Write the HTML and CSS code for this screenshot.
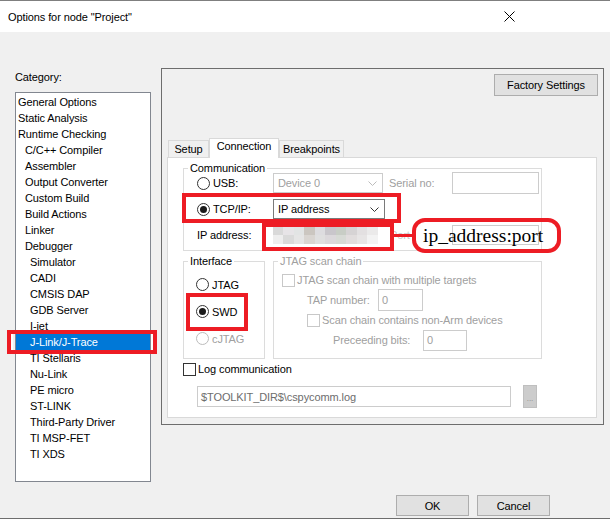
FILE: index.html
```html
<!DOCTYPE html>
<html lang="en">
<head>
    <meta charset="UTF-8">
    <title>Options for node "Project"</title>
    <link rel="stylesheet" href="styles.css">
</head>
<body>

<div class="dialog">
    <!-- Title bar -->
    <div class="titlebar">
        <span class="title">Options for node "Project"</span>
        <svg class="close" width="11" height="11" viewBox="0 0 11 11">
            <path d="M0.5 0.5 L10.5 10.5 M10.5 0.5 L0.5 10.5" stroke="#000" stroke-width="1" fill="none"/>
        </svg>
    </div>

    <div class="dialog-body">
        <div class="main">
            <!-- Category list -->
            <div class="category">
                <div class="category-label">Category:</div>
                <ul class="category-list">
                    <li>General Options</li>
                    <li>Static Analysis</li>
                    <li>Runtime Checking</li>
                    <li class="lvl2">C/C++ Compiler</li>
                    <li class="lvl2">Assembler</li>
                    <li class="lvl2">Output Converter</li>
                    <li class="lvl2">Custom Build</li>
                    <li class="lvl2">Build Actions</li>
                    <li class="lvl2">Linker</li>
                    <li class="lvl2">Debugger</li>
                    <li class="lvl3">Simulator</li>
                    <li class="lvl3">CADI</li>
                    <li class="lvl3">CMSIS DAP</li>
                    <li class="lvl3">GDB Server</li>
                    <li class="lvl3">I-jet</li>
                    <li class="lvl3 selected">J-Link/J-Trace<span class="mark mark-list"></span></li>
                    <li class="lvl3">TI Stellaris</li>
                    <li class="lvl3">Nu-Link</li>
                    <li class="lvl3">PE micro</li>
                    <li class="lvl3">ST-LINK</li>
                    <li class="lvl3">Third-Party Driver</li>
                    <li class="lvl3">TI MSP-FET</li>
                    <li class="lvl3">TI XDS</li>
                </ul>
            </div>

            <!-- Options panel -->
            <div class="options">
                <button class="btn factory">Factory Settings</button>

                <div class="tabs">
                    <div class="tab-strip">
                        <span class="tab tab-setup">Setup</span>
                        <span class="tab tab-conn active">Connection</span>
                        <span class="tab tab-bp">Breakpoints</span>
                    </div>

                    <div class="tab-page">
                        <div class="group comm">
                            <div class="group-title">Communication</div>
                            <div class="comm-grid">
                                <div class="radio-row"><span class="radio"></span>USB:</div>
                                <div class="combo disabled combo-dev">Device 0
                                    <svg width="9" height="5" viewBox="0 0 9 5"><path d="M0.5 0.5 L4.5 4.5 L8.5 0.5" stroke="#bcbcbc" fill="none"/></svg>
                                </div>
                                <div class="cell-label disabled-text">Serial no:</div>
                                <div class="field field-serial"></div>

                                <div class="radio-row"><span class="radio on"></span>TCP/IP:</div>
                                <div class="combo combo-ip">IP address
                                    <svg width="9" height="5" viewBox="0 0 9 5"><path d="M0.5 0.5 L4.5 4.5 L8.5 0.5" stroke="#333" fill="none"/></svg>
                                </div>
                                <div></div>
                                <div></div>

                                <div class="ip-label">IP address:</div>
                                <div class="blur-field">
                                    <div class="blur-row blur-a"></div>
                                    <div class="blur-row blur-b"></div>
                                </div>
                                <div class="cell-label port-label">Port</div>
                                <div class="field field-port"></div>
                            </div>

                            <span class="mark mark-tcp"></span>
                            <span class="mark mark-ip"></span>
                            <span class="mark-line"></span>
                            <span class="callout">ip_address:port</span>
                        </div>

                        <div class="lower">
                            <div class="group iface">
                                <div class="group-title">Interface</div>
                                <div class="iface-list">
                                    <div class="radio-row"><span class="radio"></span>JTAG</div>
                                    <div class="radio-row"><span class="radio on"></span>SWD<span class="mark mark-swd"></span></div>
                                    <div class="radio-row disabled-text"><span class="radio off"></span>cJTAG</div>
                                </div>
                            </div>

                            <div class="group scan">
                                <div class="group-title disabled-text">JTAG scan chain</div>
                                <div class="scan-body disabled-text">
                                    <div class="scan-row"><span class="check off"></span>JTAG scan chain with multiple targets</div>
                                    <div class="scan-row row-tap">
                                        <span class="scan-label tap-label">TAP number:</span>
                                        <span class="field field-tap">0</span>
                                    </div>
                                    <div class="scan-row row-nonarm"><span class="check off"></span>Scan chain contains non-Arm devices</div>
                                    <div class="scan-row row-bits">
                                        <span class="scan-label bits-label">Preceeding bits:</span>
                                        <span class="field field-bits">0</span>
                                    </div>
                                </div>
                            </div>
                        </div>

                        <div class="log-row"><span class="check"></span>Log communication</div>
                        <div class="path-row">
                            <div class="field field-path">$TOOLKIT_DIR$\cspycomm.log</div>
                            <div class="browse">...</div>
                        </div>
                    </div>
                </div>
            </div>
        </div>

        <div class="buttons">
            <button class="btn">OK</button>
            <button class="btn">Cancel</button>
        </div>
    </div>
</div>

</body>
</html>
```

FILE: styles.css
```css
html {
    background: #fff;
}

body {
    margin: 0;
    width: 610px;
    height: 530px;
    overflow: hidden;
    font-family: "Liberation Sans", Arial, sans-serif;
    font-size: 11px;
    letter-spacing: -0.1px;
    color: #000;
}

.dialog {
    border-top: 1px solid #7f7f7f;
}

/* title bar */
.titlebar {
    height: 31px;
    background: #fff;
    display: flex;
    align-items: center;
    padding-left: 8px;
}

.title {
    flex: 1;
    font-size: 11px;
    letter-spacing: -0.1px;
}

.close {
    margin-right: 95px;
}

.dialog-body {
    height: 486px;
    background: #f0f0f0;
    border-bottom: 1px solid #6d6d6d;
}

.main {
    display: flex;
    height: 450px;
    padding-left: 15px;
}

/* category list */
.category {
    width: 136px;
    padding-top: 37px;
}

.category-label {
    line-height: 16px;
    margin-bottom: 7px;
}

.category-list {
    list-style: none;
    margin: 0;
    padding: 1px 0 0;
    height: 390px;
    box-sizing: border-box;
    border: 1px solid #828790;
    background: #fff;
}

.category-list li {
    position: relative;
    line-height: 16px;
    padding-left: 2px;
    white-space: nowrap;
}

.category-list li.lvl2 {
    padding-left: 9px;
}

.category-list li.lvl3 {
    padding-left: 14px;
}

.category-list li.selected {
    background: #0078d7;
    color: #fff;
}

/* red annotation marks */
.mark {
    position: absolute;
    box-sizing: border-box;
    border: 4px solid #ed1c24;
}

.mark-list {
    left: -9px;
    right: -7px;
    top: -4px;
    bottom: -4px;
    box-shadow: inset 2px 0 0 #fff, inset -2px 0 0 #fff;
}

.mark-tcp {
    left: -2px;
    top: 24px;
    width: 219px;
    height: 30px;
}

.mark-ip {
    left: 78px;
    top: 54px;
    width: 132px;
    height: 28px;
}

.mark-line {
    position: absolute;
    left: 209px;
    top: 65px;
    width: 20px;
    height: 3px;
    background: #ed1c24;
}

.callout {
    position: absolute;
    left: 228px;
    top: 49px;
    width: 149px;
    height: 35px;
    box-sizing: border-box;
    border: 4px solid #ed1c24;
    border-radius: 13px;
    padding-left: 7px;
    display: flex;
    align-items: center;
    font-family: "Liberation Serif", "Times New Roman", serif;
    font-size: 19.5px;
    letter-spacing: 0;
    color: #000;
    white-space: nowrap;
}

.mark-swd {
    left: -10px;
    top: -8px;
    width: 62px;
    height: 38px;
}

/* options panel */
.options {
    margin-left: 10px;
    margin-top: 36px;
    width: 443px;
    height: 357px;
    box-sizing: border-box;
    border: 1px solid #6d6d6d;
    padding: 5px 5px 0;
    display: flex;
    flex-direction: column;
}

.btn {
    font: inherit;
    letter-spacing: inherit;
    color: #000;
    background: #e1e1e1;
    border: 1px solid #adadad;
    padding: 0;
    width: 73px;
    height: 21px;
}

.factory {
    align-self: flex-end;
    width: 104px;
    height: 22px;
}

.tabs {
    margin-top: 42px;
}

.tab-strip {
    display: flex;
    align-items: flex-end;
    height: 19px;
    padding-left: 1px;
    position: relative;
    z-index: 1;
}

.tab {
    height: 17px;
    box-sizing: border-box;
    border: 1px solid #d9d9d9;
    border-bottom: none;
    background: #f0f0f0;
    text-align: center;
    line-height: 16px;
}

.tab-setup { width: 41px; }
.tab-conn { width: 70px; }
.tab-bp { width: 65px; }

.tab.active {
    height: 20px;
    margin-bottom: -1px;
    background: #fff;
    line-height: 15px;
}

.tab-page {
    width: 430px;
    height: 261px;
    box-sizing: border-box;
    border: 1px solid #d9d9d9;
    background: #fff;
    padding: 10px 0 0 15px;
}

/* group boxes */
.group {
    position: relative;
    box-sizing: border-box;
    border: 1px solid #dcdcdc;
}

.group-title {
    width: max-content;
    background: #fff;
    padding: 0 2px;
    margin: -8px 0 0 4px;
    line-height: 14px;
}

.disabled-text {
    color: #a0a0a0;
}

.comm {
    width: 359px;
    height: 83px;
}

.comm .group-title {
    margin-bottom: -2px;
}

.comm-grid {
    display: grid;
    grid-template-columns: 76px 111px 68px 87px;
    grid-template-rows: repeat(3, 20px);
    row-gap: 6px;
    align-items: center;
    padding-left: 13px;
}

.radio-row {
    position: relative;
    display: flex;
    align-items: center;
    gap: 3px;
    height: 21px;
}

.radio {
    width: 13px;
    height: 13px;
    box-sizing: border-box;
    border: 1px solid #333;
    border-radius: 50%;
    background: #fff;
    display: inline-flex;
    align-items: center;
    justify-content: center;
}

.radio.on::after {
    content: "";
    width: 7px;
    height: 7px;
    border-radius: 50%;
    background: #1a1a1a;
}

.radio.off {
    border-color: #bcbcbc;
}

.check {
    width: 13px;
    height: 13px;
    box-sizing: border-box;
    border: 1px solid #333;
    background: #fff;
    margin-right: 2px;
    flex: none;
}

.check.off {
    border-color: #c8c8c8;
}

.combo {
    height: 20px;
    box-sizing: border-box;
    border: 1px solid #7a7a7a;
    background: #fff;
    padding: 0 5px 0 4px;
    display: flex;
    align-items: center;
    justify-content: space-between;
}

.combo.disabled {
    border-color: #cccccc;
    color: #a0a0a0;
    width: 110px;
}

.combo-ip {
    width: 112px;
}

.cell-label {
    padding-left: 5px;
}

.port-label {
    color: #c8c8c8;
    padding-left: 6px;
}

.field {
    box-sizing: border-box;
    border: 1px solid #cccccc;
    background: #fff;
}

.field-serial {
    height: 22px;
}

.field-port {
    height: 20px;
}

.blur-field {
    width: 105px;
    height: 18px;
}

.blur-row {
    height: 9px;
}

.blur-a {
    background: linear-gradient(90deg,
        #d9d9d9 0 10%, #e7e4e7 10% 20%, #e2e4e4 20% 30%, #cbc6c0 30% 40%, #dddcdf 40% 50%,
        #c9c6cb 50% 60%, #c8cdc5 60% 70%, #d6d3d4 70% 80%, #e3e0e1 80% 90%, #ebeaea 90% 100%);
}

.blur-b {
    background: linear-gradient(90deg,
        #eeeeee 0 10%, #dadada 10% 20%, #e5e5e5 20% 30%, #d9d5d1 30% 40%, #dfdfdf 40% 50%,
        #dbd8db 50% 60%, #d7dad5 60% 70%, #e1dddd 70% 80%, #e7e5e5 80% 90%, #f3f3f3 90% 100%);
}

.lower {
    display: flex;
    gap: 8px;
    margin-top: 10px;
}

.iface {
    width: 82px;
    height: 98px;
}

.iface-list {
    display: flex;
    flex-direction: column;
    gap: 6px;
    padding: 6px 0 0 12px;
}

.scan {
    width: 269px;
    height: 98px;
}

.scan-body {
    padding: 3px 0 0 8px;
}

.scan-row {
    display: flex;
    align-items: center;
    height: 18px;
    white-space: nowrap;
}

.row-tap,
.row-bits {
    height: 22px;
}

.row-tap,
.row-nonarm {
    padding-left: 25px;
}

.row-bits {
    padding-left: 51px;
}

.tap-label {
    width: 71px;
}

.bits-label {
    width: 90px;
}

.field-tap,
.field-bits {
    display: flex;
    align-items: center;
    padding-left: 3px;
    color: #a0a0a0;
}

.field-tap {
    width: 45px;
    height: 22px;
}

.field-bits {
    width: 44px;
    height: 21px;
}

.log-row {
    display: flex;
    align-items: center;
    height: 16px;
    margin-top: 2px;
}

.path-row {
    display: flex;
    align-items: center;
    height: 23px;
    margin-top: 8px;
}

.field-path {
    margin-left: 14px;
    width: 314px;
    height: 21px;
    padding-left: 3px;
    display: flex;
    align-items: center;
    color: #6d6d6d;
}

.browse {
    margin-left: 12px;
    width: 14px;
    height: 23px;
    box-sizing: border-box;
    background: #cccccc;
    border: 1px solid #bfbfbf;
    color: #8a8a8a;
    font-size: 8px;
    text-align: center;
    line-height: 26px;
}

/* dialog buttons */
.buttons {
    display: flex;
    justify-content: flex-end;
    gap: 8px;
    margin-top: 13px;
    padding-right: 60px;
}
```
